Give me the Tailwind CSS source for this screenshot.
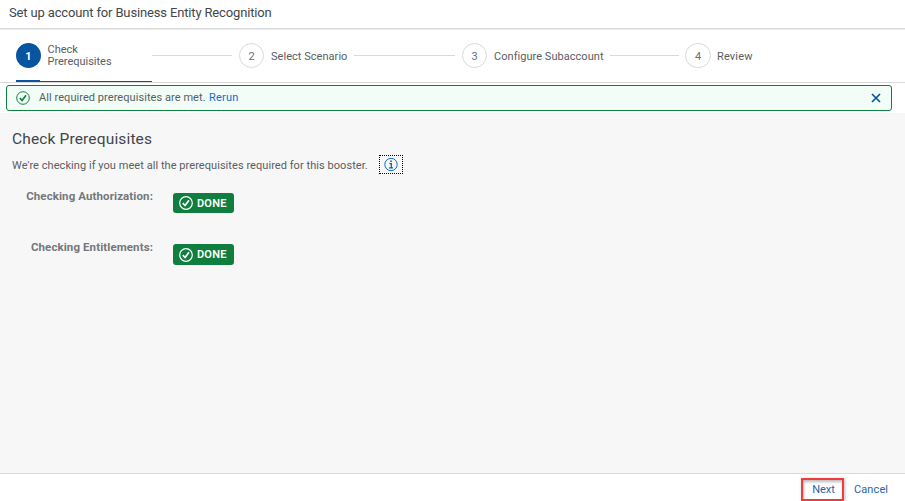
<!DOCTYPE html>
<html lang="en">
<head>
<meta charset="utf-8">
<title>Set up account for Business Entity Recognition</title>
<script src="https://cdn.jsdelivr.net/npm/@tailwindcss/browser@4"></script>
</head>
<body class="w-[905px] h-[501px] overflow-hidden bg-white font-[Roboto,sans-serif] text-[11px] leading-3 text-[#595d62] flex flex-col whitespace-nowrap">
<header class="h-[29px] shrink-0 border-b border-[#d9d9d9] shadow-[0_1px_1px_#eeeeee] pl-[9px] pt-[5px]">
  <h1 class="text-[13px] leading-4 text-[#42464a]"><span class="tracking-[-0.15px]">Set up account for Business Entity Recognition</span></h1>
</header>
<nav class="h-[54px] shrink-0 border-b border-[#d9d9d9] flex pl-4 relative">
  <div class="w-[223px] flex pt-[14px]">
    <span class="size-[25px] rounded-full bg-[#0854a0] text-white font-bold flex items-center justify-center pt-[2px]">1</span>
    <span class="w-[97px] ml-[6.5px] pt-px tracking-[-0.02px]"><span>Check</span><br><span>Prerequisites</span></span>
    <span class="w-20 h-px bg-[#d9d9d9] mt-3 ml-[7.5px]"></span>
  </div>
  <div class="w-[223px] flex pt-[14px]">
    <span class="size-[25px] rounded-full border border-[#d9d9d9] text-[#6a6d70] flex items-center justify-center pt-[2px]">2</span>
    <span class="w-[84px] ml-[7px] pt-2 tracking-[0.04px]"><span>Select Scenario</span></span>
    <span class="w-[101px] h-px bg-[#d9d9d9] mt-3 -ml-px"></span>
  </div>
  <div class="w-[223px] flex pt-[14px]">
    <span class="size-[25px] rounded-full border border-[#d9d9d9] text-[#6a6d70] flex items-center justify-center pt-[2px]">3</span>
    <span class="w-[116px] ml-[7px] pt-2 tracking-[0.04px]"><span>Configure Subaccount</span></span>
    <span class="w-[69px] h-px bg-[#d9d9d9] mt-3"></span>
  </div>
  <div class="flex pt-[14px]">
    <span class="w-[26px] h-[25px] rounded-full border border-[#d9d9d9] text-[#6a6d70] flex items-center justify-center pt-[2px]">4</span>
    <span class="ml-[6px] pt-2 tracking-[0.15px]"><span>Review</span></span>
  </div>
  <span class="absolute left-4 top-[52px] w-[136px] h-px bg-[#0854a0]"></span>
  <span class="absolute left-4 top-[51px] w-6 h-px bg-[#0854a0]"></span>
</nav>
<section class="h-[30px] shrink-0 pt-[2px] pl-[6px]">
  <div class="w-[886px] h-[26px] border border-[#107e3e] rounded-[3px] bg-[#f1fdf6] flex items-center pl-[9px] pr-[10px]">
    <svg class="size-[14px] -mt-px" viewBox="0 0 14 14" fill="none" stroke="#107e3e"><circle cx="7" cy="7" r="6.3"/><path d="M3.8 7.2 6.1 9.5 10 4.3" stroke-width="1.7"/></svg>
    <span class="ml-[9px] w-[170px] tracking-[0.06px]">All required prerequisites are met.</span>
    <a class="text-[#0a6ed1] tracking-[0.2px]">Rerun</a>
    <svg class="size-[10px] ml-auto -mt-px" viewBox="0 0 11 11" fill="none" stroke="#0854a0" stroke-width="1.9"><path d="M1.1 1.1 9.9 9.9M9.9 1.1 1.1 9.9"/></svg>
  </div>
</section>
<main class="flex-1 bg-[#f7f7f7] pl-3">
  <h2 class="pt-4 text-[15.5px] leading-5 text-[#42464a]"><span class="tracking-[0.15px]">Check Prerequisites</span></h2>
  <div class="flex h-[19px] mt-[6px]">
    <p class="w-[367px] pt-[5px]"><span class="tracking-[0.055px]">We're checking if you meet all the prerequisites required for this booster.</span></p>
    <button class="w-6 h-[19px] border border-dotted border-black flex items-center justify-center">
      <svg class="size-[14px]" viewBox="0 0 14 14" fill="none" stroke="#0a6ed1"><circle cx="7" cy="6.5" r="6.2"/><path d="M5.5 5.7H7.3V9.8M5.2 9.8H9" stroke="#0854a0" stroke-width="1.2"/><path d="M6.3 3.3H7.8" stroke="#0854a0" stroke-width="1.5"/></svg>
    </button>
  </div>
  <div class="flex mt-[19px] h-[51px] font-bold text-[#74777a]">
    <span class="w-[141px] flex justify-end -mt-[3px] text-[11.5px] tracking-[0.1px]">Checking Authorization:</span>
    <span class="ml-5 w-[61px] h-5 rounded-[3px] bg-[#107e3e] text-white flex items-center pl-[6px] gap-1"><svg class="size-[14px]" viewBox="0 0 14 14" fill="none" stroke="#fff"><circle cx="7" cy="7" r="6.3" stroke-width="1.2"/><path d="M3.8 7.2 6.1 9.5 10 4.3" stroke-width="1.7"/></svg><span class="pt-px tracking-[0.2px] font-semibold">DONE</span></span>
  </div>
  <div class="flex font-bold text-[#74777a]">
    <span class="w-[141px] flex justify-end -mt-[3px] text-[11.5px] tracking-[0.1px]">Checking Entitlements:</span>
    <span class="ml-5 w-[61px] h-[21px] rounded-[3px] bg-[#107e3e] text-white flex items-center pl-[6px] gap-1"><svg class="size-[14px]" viewBox="0 0 14 14" fill="none" stroke="#fff"><circle cx="7" cy="7" r="6.3" stroke-width="1.2"/><path d="M3.8 7.2 6.1 9.5 10 4.3" stroke-width="1.7"/></svg><span class="tracking-[0.2px] font-semibold">DONE</span></span>
  </div>
</main>
<footer class="h-7 shrink-0 border-t border-[#d9d9d9] flex text-[#2864a6] pl-[801px] pt-1">
  <button class="w-[43px] h-[23px] border-2 border-[#f03c3c] shadow-[1px_1px_3px_#bbb,inset_1px_2px_3px_#bbb] text-center pl-[2px]">Next</button>
  <button class="ml-[10px] h-[23px] tracking-[0.1px]">Cancel</button>
</footer>
</body>
</html>
